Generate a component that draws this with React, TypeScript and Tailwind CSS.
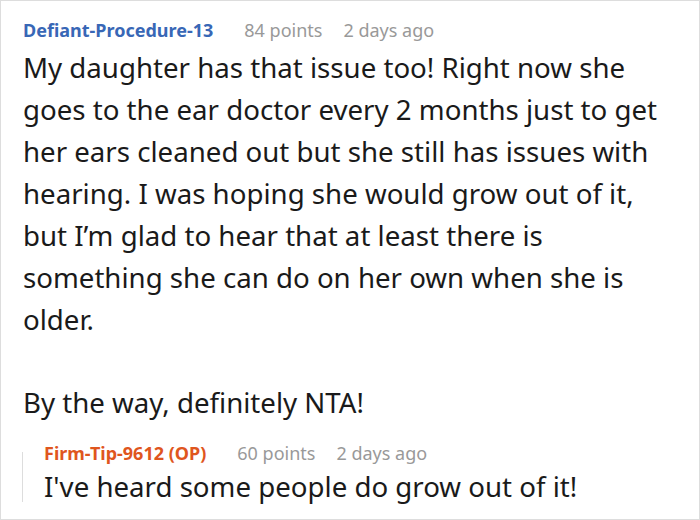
import React from "react";

const lines = [
  "My daughter has that issue too! Right now she",
  "goes to the ear doctor every 2 months just to get",
  "her ears cleaned out but she still has issues with",
  "hearing. I was hoping she would grow out of it,",
  "but I\u2019m glad to hear that at least there is",
  "something she can do on her own when she is",
  "older.",
];

const App: React.FC = () => {
  return (
    <div
      className="w-[700px] h-[520px] bg-white border border-[#dddddd] overflow-hidden pt-[17px] pl-[22px]"
      style={{ fontFamily: '"Noto Sans", "Open Sans", sans-serif' }}
    >
      {/* comment header */}
      <div className="flex items-baseline text-[18px] leading-[24px] whitespace-nowrap">
        <span className="font-bold text-[#3867b6]">Defiant-Procedure-13</span>
        <span className="ml-[31px] text-[#999999]">84 points</span>
        <span className="ml-[21px] text-[#999999]">2 days ago</span>
      </div>

      <div className="mt-[4px] text-[27.65px] leading-[42px] text-[#1a1a1a] whitespace-nowrap">
        {lines.map((l, i) => (
          <div key={i}>{l}</div>
        ))}
        <div className="mt-[41px]">By the way, definitely NTA!</div>
      </div>

      {/* reply */}
      <div className="flex -ml-px mt-[18px]">
        <div className="w-px h-[50px] mt-[11px] bg-[#dddddd]" />
        <div className="ml-[21px]">
          <div className="flex items-baseline text-[18px] leading-[24px] whitespace-nowrap">
            <span className="font-bold text-[#df561e]">Firm-Tip-9612 (OP)</span>
            <span className="ml-[31px] text-[#999999]">60 points</span>
            <span className="ml-[21px] text-[#999999]">2 days ago</span>
          </div>
          <div className="text-[27.65px] leading-[42px] text-[#1a1a1a] whitespace-nowrap">
            I've heard some people do grow out of it!
          </div>
        </div>
      </div>
    </div>
  );
};

export default App;
